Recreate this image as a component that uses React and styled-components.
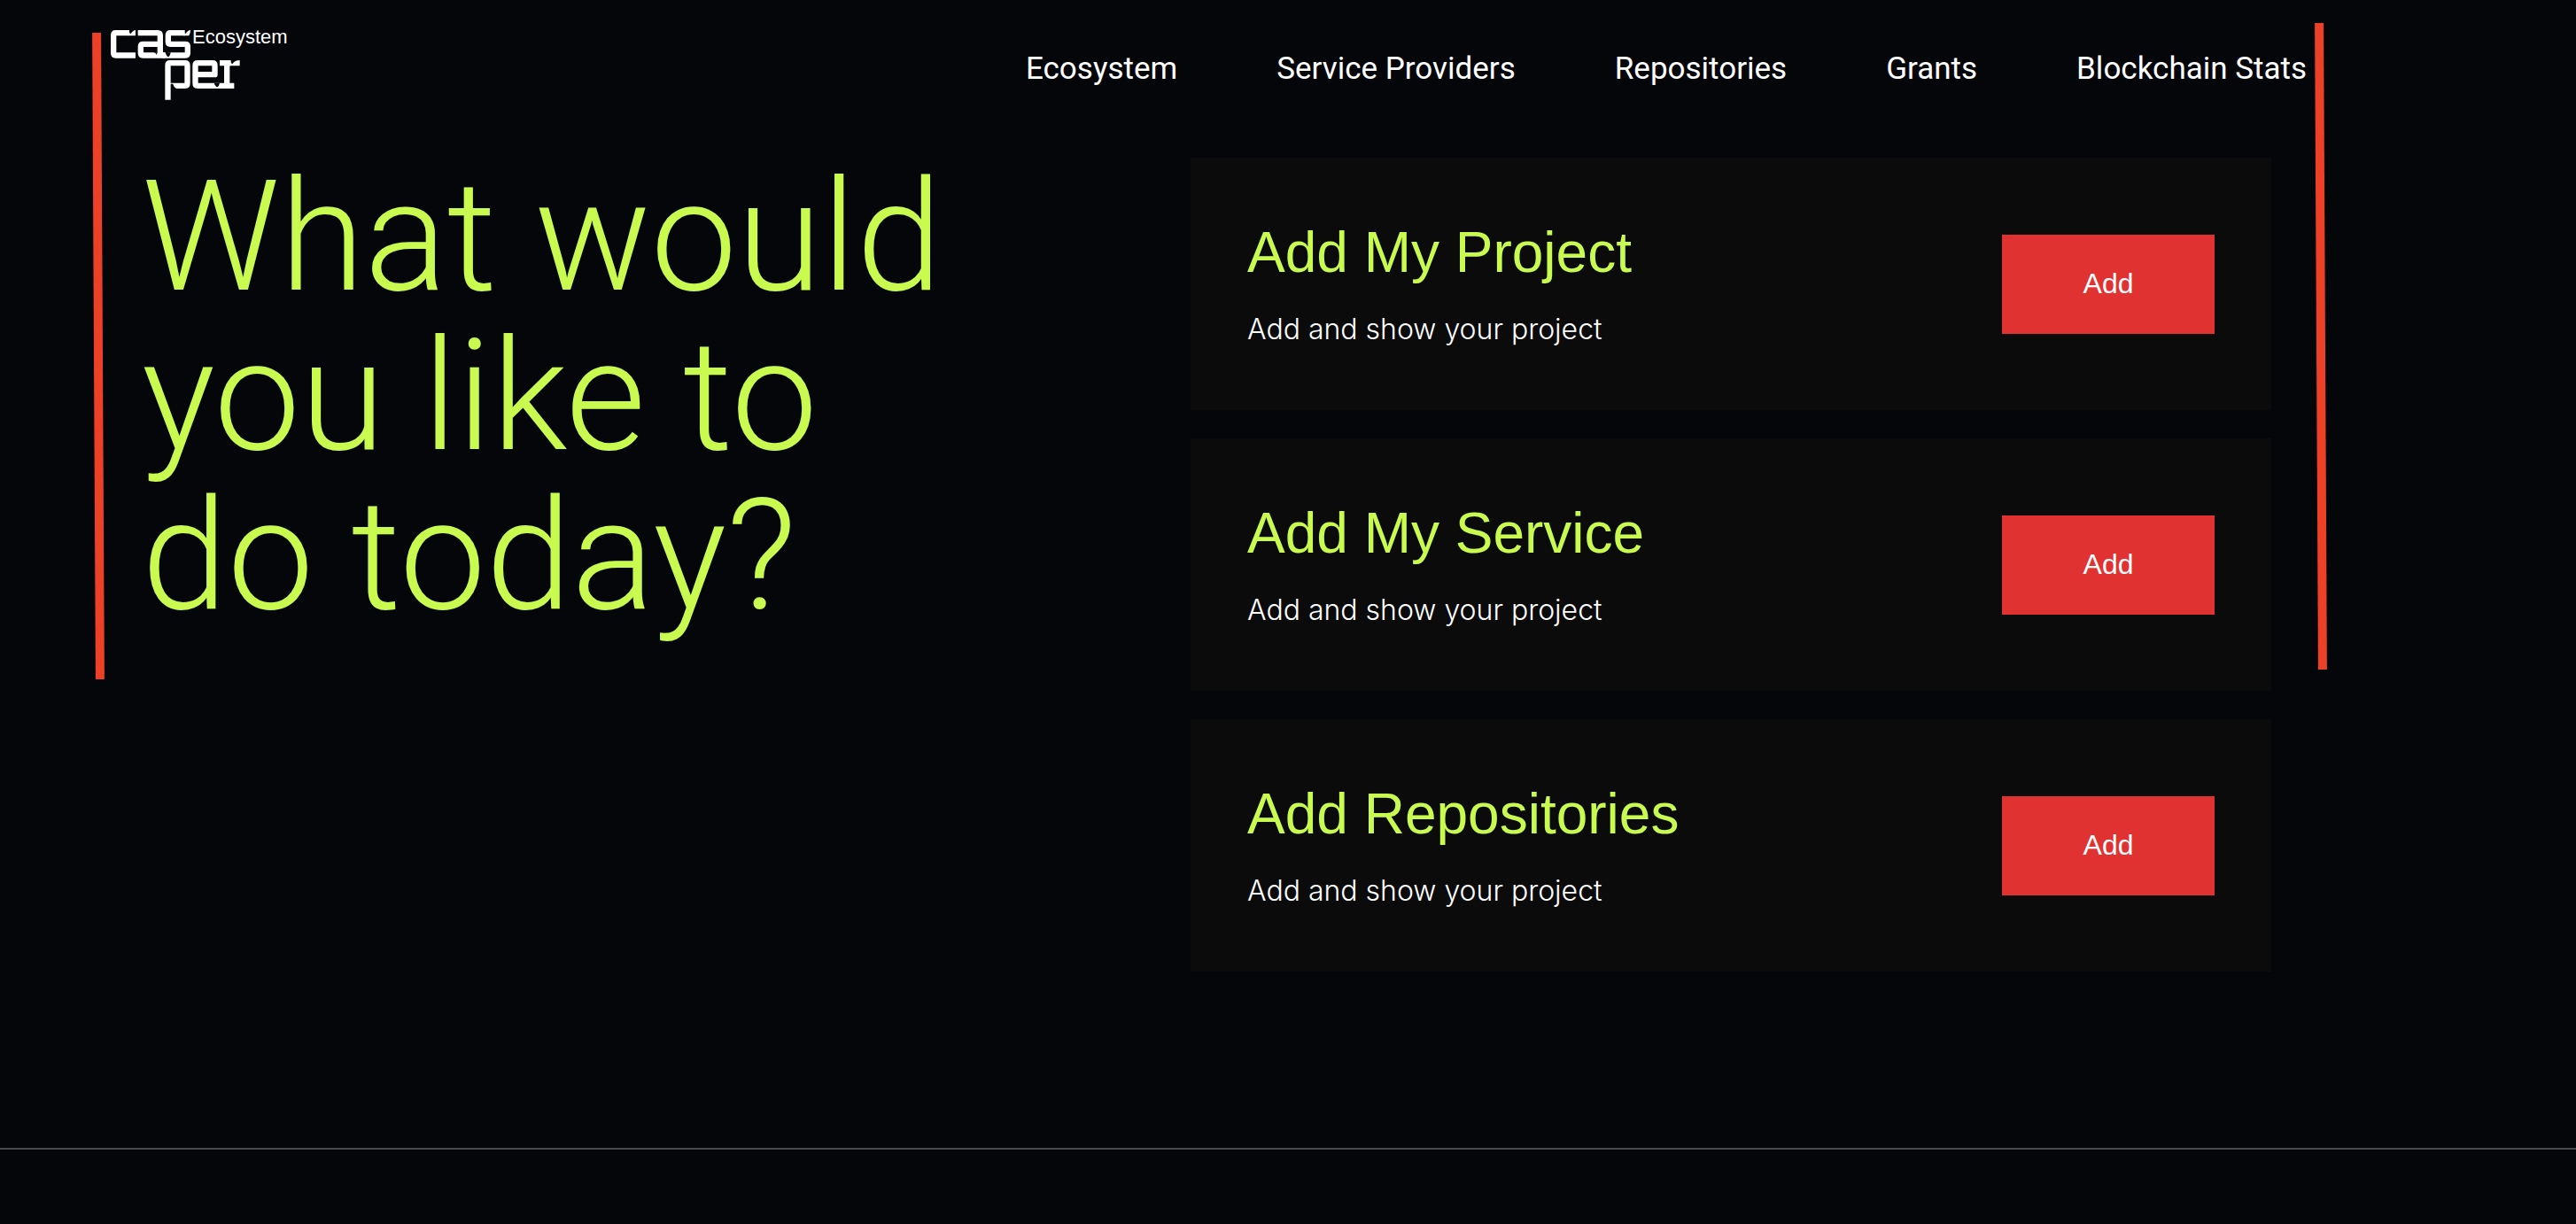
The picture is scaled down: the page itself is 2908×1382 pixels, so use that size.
import React from "react";
import styled, { createGlobalStyle } from "styled-components";

const colors = {
  page: "#040609",
  card: "#0b0b0b",
  lime: "#c8fa50",
  stripe: "#ec4127",
  button: "#e03231",
  white: "#ffffff",
  rule: "#48494b",
};

const sans = `"Liberation Sans", Arial, sans-serif`;
const roboto = `Roboto, "Liberation Sans", sans-serif`;
const inter = `Inter, "Liberation Sans", sans-serif`;

const GlobalStyle = createGlobalStyle`
  *, *::before, *::after { box-sizing: border-box; }
  body {
    margin: 0;
    background: ${colors.page};
    color: ${colors.white};
    font-family: ${sans};
  }
`;

const Page = styled.div`
  position: relative;
`;

const Stripe = styled.span`
  position: absolute;
  top: ${(p) => (p.$side === "left" ? 37 : 26)}px;
  ${(p) => (p.$side === "left" ? "left: 106px;" : "right: 283px;")}
  width: 10px;
  height: 730px;
  background: ${colors.stripe};
  transform: skewX(0.3deg);
  pointer-events: none;
`;

const Header = styled.header`
  display: flex;
  justify-content: space-between;
  align-items: flex-start;
  min-height: 178px;
  padding: 33px 304px 0 124px;
`;

const Brand = styled.a`
  display: grid;
  grid-template-columns: 93px auto;
  color: inherit;
  text-decoration: none;
`;

const Wordmark = styled.svg`
  grid-area: 1 / 1 / 2 / 3;
  width: 148px;
  height: 80px;
`;

const BrandText = styled.span`
  grid-area: 1 / 2;
  font-size: 22px;
  line-height: 18px;
`;

const Nav = styled.nav`
  display: flex;
  gap: 112px;
  padding-top: 20px;
`;

const NavLink = styled.a`
  color: inherit;
  font-family: ${roboto};
  font-size: 35px;
  line-height: 50px;
  text-decoration: none;
  white-space: nowrap;
`;

const Hero = styled.main`
  display: grid;
  grid-template-columns: 1fr 1fr;
  padding: 0 344px 199px 124px;
`;

const Heading = styled.h1`
  max-width: 960px;
  margin: 0;
  padding-left: 36px;
  color: ${colors.lime};
  font-family: ${roboto};
  font-size: 174px;
  font-weight: 300;
  line-height: 180px;
`;

const CardList = styled.div`
  display: flex;
  flex-direction: column;
  gap: 32px;
`;

const Card = styled.section`
  display: flex;
  justify-content: space-between;
  align-items: center;
  padding: 67px 64px;
  background: ${colors.card};
`;

const CardBody = styled.div`
  display: flex;
  flex-direction: column;
  gap: 23px;
`;

const CardTitle = styled.h2`
  margin: 0;
  color: ${colors.lime};
  font-size: 64px;
  font-weight: 400;
  line-height: 80px;
`;

const CardText = styled.p`
  margin: 0;
  font-family: ${inter};
  font-size: 32px;
  font-weight: 300;
  line-height: 48px;
`;

const AddButton = styled.button`
  width: 240px;
  height: 112px;
  border: 0;
  background: ${colors.button};
  color: ${colors.white};
  font-family: ${sans};
  font-size: 32px;
  cursor: pointer;
`;

const Footer = styled.footer`
  height: 86px;
  border-top: 2px solid ${colors.rule};
`;

const links = ["Ecosystem", "Service Providers", "Repositories", "Grants", "Blockchain Stats"];

const cards = ["Add My Project", "Add My Service", "Add Repositories"];

function Logo() {
  return (
    <Wordmark viewBox="102 69 444 240" aria-hidden="true">
      <g fill="none" stroke="#fff" strokeWidth="19" strokeLinejoin="round">
        <path d="M189 157.500H122Q114.500 157.500 114.500 150V89Q114.500 81.500 122 81.500H168" />
        <path d="M197 81.500H264Q272.500 81.500 272.500 90V157.500M272.500 119.500H214Q206.500 119.500 206.500 127V150Q206.500 157.500 214 157.500H290" />
        <path d="M356 81.500H307Q299.500 81.500 299.500 89V112Q299.500 119.500 307 119.500H358Q365.500 119.500 365.500 127V150Q365.500 157.500 358 157.500H280" />
        <path d="M298.500 308V191Q298.500 183.500 306 183.500H357Q364.500 183.500 364.500 191V253Q364.500 260.500 357 260.500H306" />
        <path d="M391.500 222.500H457.500V191Q457.500 183.500 450 183.500H399Q391.500 183.500 391.500 191V253Q391.500 260.500 399 260.500H523" />
        <path d="M474 183.500H498.500V260.500M498.500 183.500H512" />
      </g>
      <g fill="#fff">
        <path d="M166 72Q168 84 173 84Q181 72 189 72V91H166Z" />
        <path d="M352 72Q354 84 359 84Q366 72 375 72Q375 82 370 91H352Z" />
        <path d="M508 174Q512 186 518 186Q524 174 542 174V193H508Z" />
      </g>
      <g fill={colors.page}>
        <path d="M251 148Q259 150 260 155Q262 150 264 148Z" />
        <path d="M289 140Q292 162 301 163Q307 158 308 148H299Z" />
        <path d="M308 256Q311 252 316 255Q318 266 328 271H308Z" />
        <path d="M455 251Q460 264 466 265Q472 262 474 251Z" />
      </g>
    </Wordmark>
  );
}

export default function App() {
  return (
    <Page>
      <GlobalStyle />
      <Header>
        <Brand href="#" aria-label="Casper Ecosystem">
          <Logo />
          <BrandText>Ecosystem</BrandText>
        </Brand>
        <Nav>
          {links.map((label) => (
            <NavLink key={label} href="#">
              {label}
            </NavLink>
          ))}
        </Nav>
      </Header>
      <Hero>
        <Heading>What would you like to do today?</Heading>
        <CardList>
          {cards.map((title) => (
            <Card key={title}>
              <CardBody>
                <CardTitle>{title}</CardTitle>
                <CardText>Add and show your project</CardText>
              </CardBody>
              <AddButton type="button">Add</AddButton>
            </Card>
          ))}
        </CardList>
      </Hero>
      <Footer />
      <Stripe $side="left" />
      <Stripe $side="right" />
    </Page>
  );
}
